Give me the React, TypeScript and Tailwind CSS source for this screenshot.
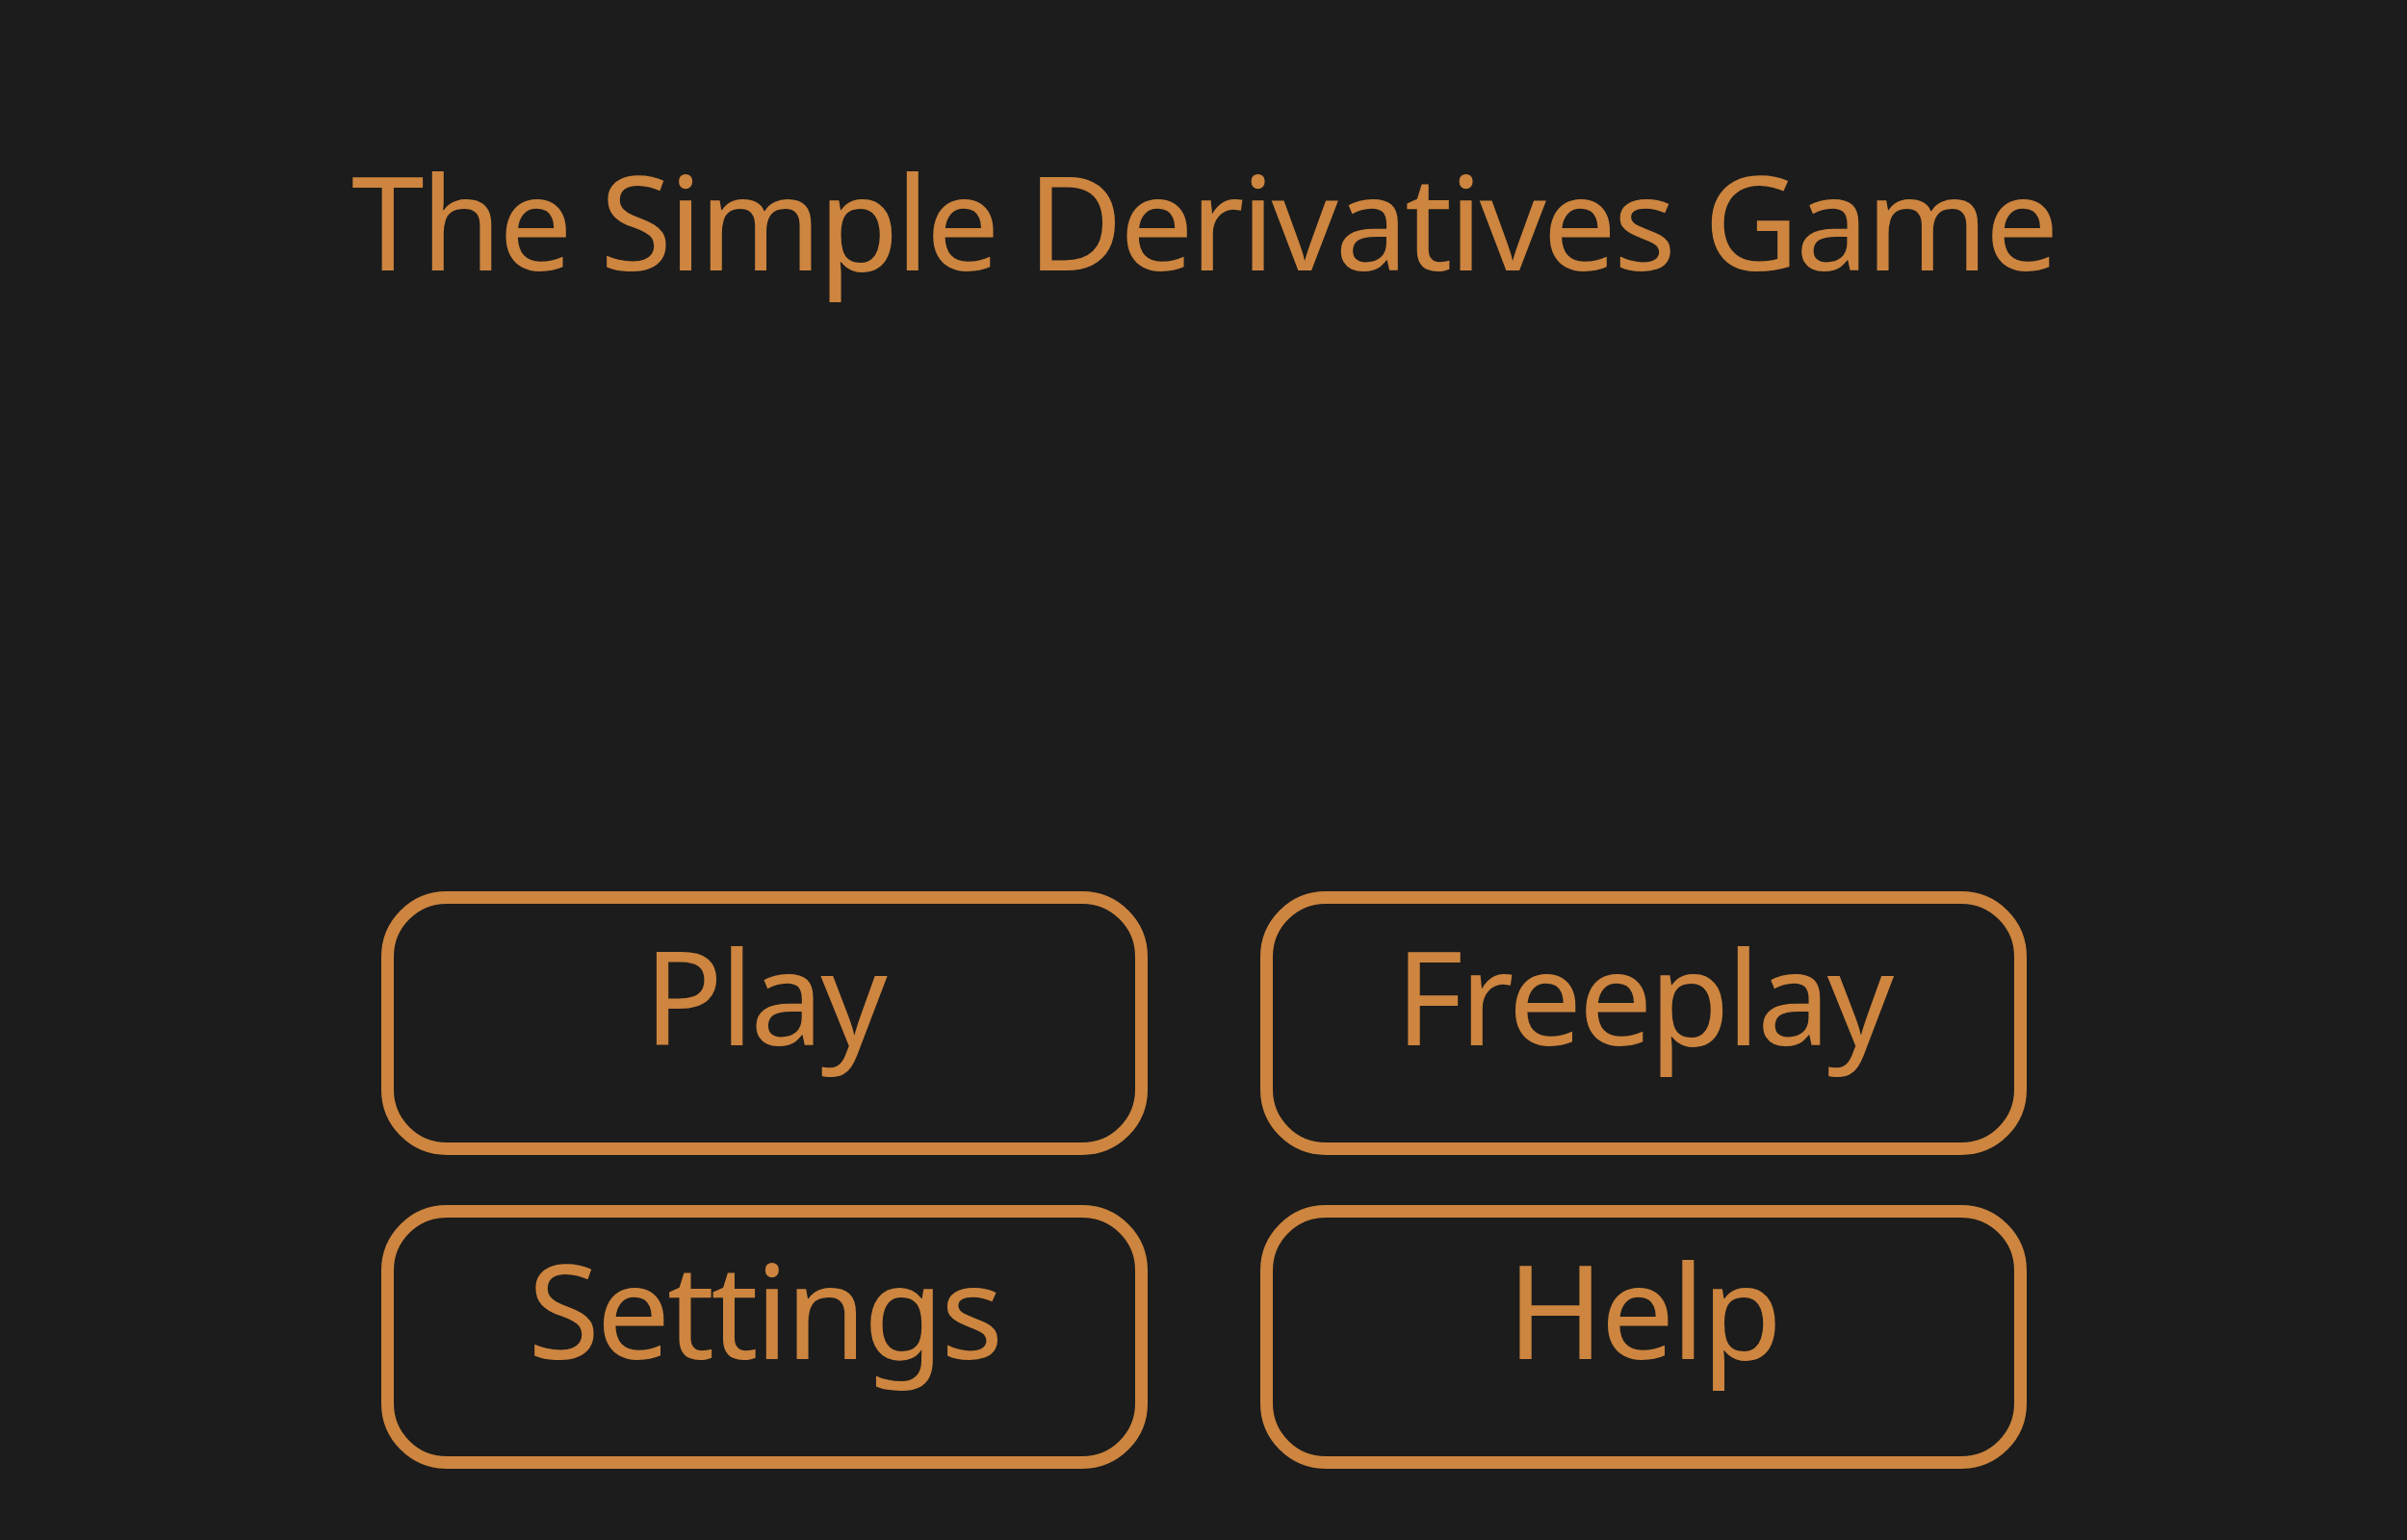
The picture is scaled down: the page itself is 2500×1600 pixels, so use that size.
const buttons = ["Play", "Freeplay", "Settings", "Help"];

export default function App() {
  return (
    <div
      className="min-h-screen w-full bg-[#1c1c1c] text-[#cd853f]"
      style={{ fontFamily: '"Comic Sans MS", "Noto Sans", sans-serif' }}
    >
      {/* title */}
      <h1 className="pt-[161px] text-center text-[136px] font-normal leading-none tracking-[-3.4px]">
        The Simple Derivatives Game
      </h1>

      {/* menu buttons */}
      <div className="mx-auto mt-[629px] grid w-[1709px] grid-cols-2 gap-x-[117px] gap-y-[52px]">
        {buttons.map((label) => (
          <button
            key={label}
            className="flex h-[274px] items-start justify-center rounded-[68px] border-[13px] border-[#cd853f] bg-transparent pt-[27px] text-[136px] leading-none tracking-[-3.4px]"
          >
            {label}
          </button>
        ))}
      </div>
    </div>
  );
}
